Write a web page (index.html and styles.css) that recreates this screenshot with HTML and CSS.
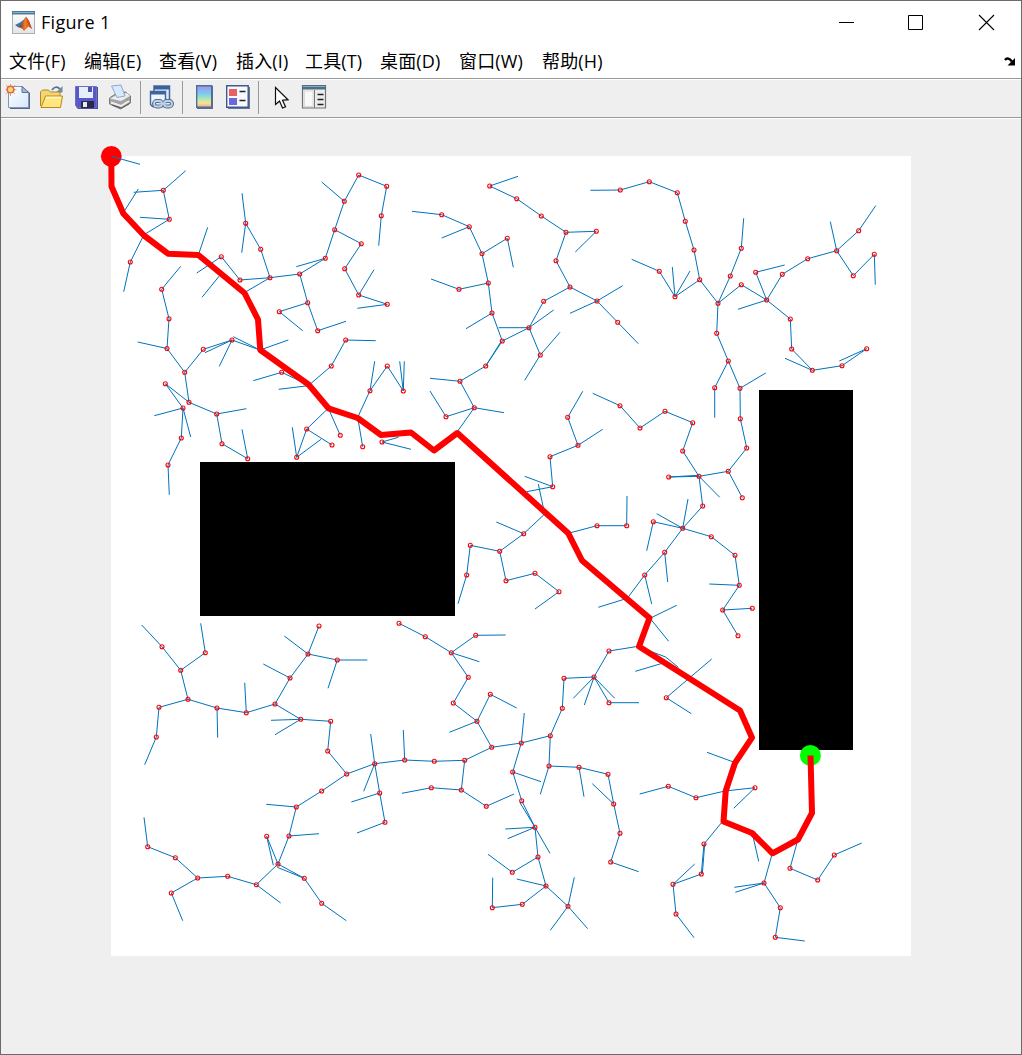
FILE: index.html
```html
<!DOCTYPE html>
<html lang="zh-CN">
<head>
<meta charset="utf-8">
<title>Figure 1</title>
<link rel="stylesheet" href="styles.css">
</head>
<body>
<div class="window">
  <header class="titlebar">
    <svg class="logo" viewBox="0 0 24 24">
      <defs>
        <linearGradient id="lg" x1="0" x2="1"><stop offset="0" stop-color="#7a1c10"/><stop offset=".5" stop-color="#f0802a"/><stop offset="1" stop-color="#b33a14"/></linearGradient>
        <linearGradient id="lb" x1="0" x2="0" y1="0" y2="1"><stop offset="0" stop-color="#fff"/><stop offset="1" stop-color="#e2e4e6"/></linearGradient>
      </defs>
      <rect x=".5" y=".5" width="22" height="22" fill="url(#lb)" stroke="#a9b0b5"/>
      <rect x="0" y="0" width="23" height="3.5" fill="#4f7c9a"/><rect x="1" y="1" width="21" height="1" fill="#84b0ca"/>
      <path d="M3 14l5-2.500 4-3 2-3-4 12.500-2-2-2 .3z" fill="#3a76b0"/>
      <path d="M6.500 16.500L10 12.500 14 5.500 17 10 20 18 16.500 15.500 12 20 9.500 16.500z" fill="url(#lg)"/>
      <path d="M14 5.500L15.500 11.500 20 18 17 10z" fill="#d4481c"/>
    </svg>
    <h1 class="title">Figure 1</h1>
    <svg class="controls" viewBox="811 1 210 45">
      <path d="M839 22.500h15M908.500 15.500h14v14h-14z" fill="none" stroke="#000"/>
      <path d="M979 15l15 15M994 15l-15 15" stroke="#000" stroke-width="1.100"/>
    </svg>
  </header>
  <nav class="menubar">
    <span>文件(F)</span><span>编辑(E)</span><span>查看(V)</span><span>插入(I)</span><span>工具(T)</span><span>桌面(D)</span><span>窗口(W)</span><span>帮助(H)</span>
    <svg class="dock" viewBox="0 0 12 10"><path d="M1 3C3 .5 5.500 1.500 8 4.500" fill="none" stroke="#000" stroke-width="2.400"/><path d="M11 1v7.500H3.500z"/></svg>
  </nav>
  <div class="toolbar">
    <svg width="34" viewBox="1 80 34 37">
      <defs><linearGradient id="pg" x1="0" y1="0" x2="1" y2="1"><stop offset="0" stop-color="#fff"/><stop offset="1" stop-color="#d5e8fb"/></linearGradient></defs>
      <path d="M9 87h14l7 6v16H10z" fill="#56688f"/>
      <path d="M8.500 86.500h14l6 6v15h-20z" fill="url(#pg)" stroke="#8294b8"/><path d="M22 86.500v6h6.500z" fill="#a7b9da" stroke="#60739f"/>
      <path d="M6 85l9 9M15 85l-9 9M10.500 84v12M5.500 89.700h11" stroke="#e7a27a"/><circle cx="10.500" cy="89.500" r="3.300" fill="#f8d377" stroke="#dc6942" stroke-width="1.500"/>
    </svg>
    <svg width="34" viewBox="35 80 34 37">
      <path d="M52 90c2-3 5-4 8-1" fill="none" stroke="#536f91" stroke-width="1.700"/><path d="M62.500 86v6.500H56z" fill="#6e8dac"/>
      <path d="M40.500 106V92l2-2h6l2 2h9.500v5" fill="#f2d575" stroke="#b8861a"/>
      <path d="M41 107.500l4.500-11.500h17l-2 11.500z" fill="#ffe780" stroke="#bd8717"/><path d="M46 97.500h15" stroke="#fff8c5" stroke-width="1.500"/>
    </svg>
    <svg width="35" viewBox="69 80 35 37">
      <path d="M76 87h22v22H78l-2-2z" fill="#4c4e9d"/><path d="M75.500 86.500h21v21h-19l-2-2z" fill="#5858c8" stroke="#6e70bd"/>
      <path d="M79 87h14v11H79z" fill="#e6edfc"/><path d="M88 87h4v5h-4z" fill="#4c54aa"/><path d="M81 101h13v7H81z" fill="#29294b"/><path d="M83 102h4v5h-4z" fill="#e8e8f4"/>
    </svg>
    <svg width="36" viewBox="104 80 36 37">
      <path d="M109.500 98l6-4 10-2 5 4v7l-10 6-11-5z" fill="#a4a4a4" stroke="#7a7a7a"/>
      <path d="M110 98.500l7-3.500 10-2 3 3-9 5z" fill="#ededed"/>
      <path d="M111.500 86l9.500-1 4 11-8 1.500z" fill="#d7e9ff" stroke="#8ca8cc"/>
      <path d="M111 102.500l10 3.500 8-5" fill="none" stroke="#eee" stroke-width="2"/><path d="M112 105l9.500 3 8-4.500" fill="none" stroke="#555"/>
      <circle cx="127.500" cy="99.500" r="1" fill="#72b450"/>
    </svg>
    <i class="sep"></i>
    <svg width="41" viewBox="141 80 41 37">
      <path d="M154 86h15.500v14H154z" fill="#dceafa" stroke="#486a9c" stroke-width="1.500"/><path d="M154 86h16v3.500h-16z" fill="#3c629b"/>
      <path d="M150.500 91.500h15v15h-13l-2-2z" fill="#eef5ff" stroke="#42659a" stroke-width="1.400"/><path d="M150 91h16v3.500h-16z" fill="#40649d"/>
      <g fill="none" stroke="#526b8e" stroke-width="4"><rect x="154" y="101" width="8" height="5.500" rx="2.700"/><rect x="164" y="101" width="8" height="5.500" rx="2.700"/></g>
      <g fill="none" stroke="#bfd3ea" stroke-width="1.800"><rect x="154" y="101" width="8" height="5.500" rx="2.700"/><rect x="164" y="101" width="8" height="5.500" rx="2.700"/><path d="M159 103.700h8"/></g>
    </svg>
    <i class="sep"></i>
    <svg width="38" viewBox="183 80 38 37">
      <defs><linearGradient id="cb" x1="0" x2="0" y1="0" y2="1"><stop offset="0" stop-color="#a293e8"/><stop offset=".35" stop-color="#7cc7f3"/><stop offset=".6" stop-color="#a7e7b4"/><stop offset=".8" stop-color="#f4e795"/><stop offset="1" stop-color="#f5a58a"/></linearGradient></defs>
      <path d="M197 86h16v23h-16z" fill="#5d6b8c"/><path d="M196.700 85.700h15v21.500h-15z" fill="url(#cb)" stroke="#526c9d" stroke-width="1.400"/>
    </svg>
    <svg width="37" viewBox="221 80 37 37">
      <path d="M228 87h22v22h-22z" fill="#69769a"/><path d="M226.700 85.700h21.500v21.500h-21.500z" fill="#f6f9ff" stroke="#405a8d" stroke-width="1.400"/>
      <path d="M229 89h8v7h-8z" fill="#e7625f"/><path d="M229 98h8v7h-8z" fill="#6b68dd"/><path d="M239.500 91.500h6M239.500 100.500h6" stroke="#222" stroke-width="1.500"/>
    </svg>
    <i class="sep"></i>
    <svg width="38" viewBox="259 80 38 37">
      <path d="M276.500 88v17l4-3.500 3 7 3-1.300-3-6.500 5.500-.5z" fill="#aaa" opacity=".7"/>
      <path d="M275.500 87.500v17l4-3.500 3 7 3-1.300-3-6.500 5.500-.5z" fill="#fff" stroke="#111" stroke-width="1.200"/>
    </svg>
    <svg width="34" viewBox="297 80 34 37">
      <path d="M302.500 85.500h23v22.500h-23z" fill="#ececec" stroke="#6f7376" stroke-width="1.200"/><path d="M302 85h24v4.500h-24z" fill="#4f6f82"/><path d="M303 86.500h22" stroke="#85adc1"/>
      <path d="M304 90.500h9.500V107H304z" fill="#dadada"/><path d="M305 91.500h7.500V106H305z" fill="#f8f8f8"/><path d="M314.500 90v18" stroke="#777"/><path d="M317.500 94.500h6M317.500 99.500h6M317.500 104.500h6" stroke="#222" stroke-width="1.600"/>
    </svg>
  </div>
  <main class="figure">
    <svg class="plot" viewBox="1 119 1020 935">
      <rect x="111" y="156" width="800" height="800" fill="#fff"/>
      <path class="obstacle" d="M200 462h255v154H200zM759 390h94v360h-94z"/>
      <circle cx="111.300" cy="156.300" r="10.400" fill="#f00"/><circle cx="810.400" cy="755.400" r="10.500" fill="#0f0"/>
      <path id="edges" class="edges"/>
      <g id="nodes" class="nodes"></g>
      <path class="route" d="M111.300 156L111.500 186.500 123.300 213.500 144 235.500 168 253.700 198.300 255 244.500 293 258 319.500 260.300 350 308.500 384.500 328.500 408.300 357.700 418 381 435 411 432.500 434 450.500 457.300 433 568.300 533.300 582 560.500 649.500 618 639 646.500 740 710.500 752 737.700 735 763 725.700 791 723.500 821.500 752 833 772.500 853.300 798 839.500 812 813 810.500 755.500"/>
      <path class="edges" d="M111.300 156.300L140 164.300"/>
    </svg>
  </main>
</div>
<script src="tree.js"></script>
</body>
</html>
```
FILE: styles.css
```css
body { margin: 0; background: #efefef; color: #000; }
.window {
  box-sizing: border-box;
  width: 1022px;
  height: 1055px;
  border: 1px solid #6b6b6b;
  background: #efefef;
  display: flex;
  flex-direction: column;
  overflow: hidden;
}
.titlebar {
  height: 45px;
  flex: none;
  background: #fff;
  display: flex;
  align-items: center;
}
.logo { width: 24px; height: 24px; margin: 0 5px 2px 11px; }
.title {
  flex: 1;
  margin: 0 0 4px;
  font: 400 18px/24px "Open Sans", "Noto Sans", sans-serif;
  letter-spacing: 0.3px;
}
.controls { width: 210px; height: 45px; }
.menubar {
  box-sizing: border-box;
  height: 32px;
  flex: none;
  padding: 0 5px 2px 8px;
  background: #fff;
  display: grid;
  grid-template-columns: 75px 75px 77px 69px 75px 79px 83px 1fr 12px;
  align-items: center;
  font: 400 18px/30px "Open Sans", "Noto Sans CJK SC", sans-serif;
  white-space: nowrap;
}
.menubar span { letter-spacing: 0.15px; }
.dock { width: 12px; height: 10px; margin-top: 2px; }
.toolbar {
  height: 37px;
  flex: none;
  display: flex;
  border-top: 1px solid #999;
  border-bottom: 1px solid #999;
  box-shadow: inset 0 1px #fff, 0 1px #fff;
  padding-top: 1px;
}
.toolbar svg { height: 37px; flex: none; }
.sep { width: 1px; height: 33px; margin-top: 1px; background: #999; flex: none; }
.figure { flex: 1; margin-top: 1px; min-height: 0; }
.plot { display: block; width: 1020px; height: 935px; }
.obstacle { fill: #000; }
.edges { fill: none; stroke: #0072bd; stroke-width: 1; }
.nodes circle { fill: none; stroke: #f00; stroke-width: 1.1; }
.route { fill: none; stroke: #f00; stroke-width: 6; stroke-linejoin: round; }
```
FILE: tree.js
```js
// One branch per line; a trailing "o" marks an expanded tree node.
const branches = `
123.3,212.7 138.3,189
133.7,192.3 163.3,190.3o 185.7,170.7
163.3,190.3 169.3,219.3o 140,217.3
169.3,219.3 144,234.7 130.3,262o 123.7,291.7
198.7,254 207.7,227.3
196.7,273 221.3,256.7o 240,280o 270,277.7o 299.7,274o 325.3,258.3o 334.7,229.7o 344.3,201.3o 358.7,175o 386.7,186.3o 381.3,215.7o 378.7,245.7
321.7,182 344.3,201.3
325.3,258.3 296.3,266.7
334.7,229.7 361.3,243.7o 344.7,268.7o 358.7,295o 387.3,304.3o 357.3,308.3
358.7,295 374,269.7
270,277.7 260.7,249.3o 245.7,223.3o 242,193.3
245.7,223.3 241.7,252.7
270,277.7 245,292.3
219.3,276 202,297.3
299.7,274 307.7,302.7o 317.7,330.7o 346,321.3
307.7,302.7 279.3,311.7o 302.7,330.7
180.7,266.3 161.7,289.3o 169,318.7o 167,348.5o 137.7,342
167,348.5 184.7,372.3o 203.3,349.3o 232,340o 260,350 288.3,340
232,340 205,352.7
232,340 219.3,366.3
233.3,336.7 260,350
184.7,372.3 189,402.3o 216.7,414o 246.3,408.7
216.7,414 222,443.7o 247.7,458.7o 242,429.3
189,402.3 165.3,383.7o 183,408o 154.3,415.7
183,408 190.7,437
183,408 181.3,438o 168,465o 169.3,494.7
253.3,380.7 281.7,372.3o 308.3,385
278.7,389.3 308.3,385.7 331.3,366o 345.7,340o 375.7,340.7
328.3,408.3 306.7,429o 332,445o
306.7,429 296.7,457.3o 292.3,427.3
296.7,457.3 321,439.3
328.3,408.3 340.3,435.3o
362.7,446.7o 357.7,417.3 370,390.7o 374.7,361.3
370,390.7 387.3,366o 403.3,391o 399.7,361.3
403.3,391 404.3,361.3
398.3,437.3 382,442o 411,449.3
412,211.3 441.7,214.7o 469.3,226.7o 441.7,238
469.3,226.7 482,253.7o 507.3,238.3o 513.3,267.3
482,253.7 488.3,283o 459,289.3o 431,279
488.3,283 492,313o 466,328.7
492,313 502.3,341o 485.7,366o 460,381.3o 430,378.3
485.7,366 501,341.7
460,381.3 474.3,407.7o 446,416.7o 430,391
504,412.7 474.3,407.7 457.3,431.7
502.3,341 529,327.7o 498.7,327.7
553.7,310 529,327.7 540.3,355o 560,332.3
540.3,355 524.7,380.3
529,327.7 543.7,301.3o 570,287o 556,260.7o 566,232.3o 596.3,231.3o 575.3,252
566,232.3 541.3,216o 516.7,198.7o 489.7,186o 518,176.3
570,287 597,301o 622.7,285.7
570,313.3 597,301 617.7,322.3o 638.3,343.7
582.7,391.3 567.7,417.3o 578,445.3o 602.7,429.3
578,445.3 550,456.7o 552.7,486.7o 524.7,476.3
552.7,486.7 526.7,491.7
590.3,190.3 620.3,190o 649.3,181.7o 677.3,192.7o 685.3,221.3o 694,250o 699.7,279.7o 675,296.7o 659.3,271.3o 631.7,259.3
672.3,267 675,296.7 690,271
699.7,279.7 718,303.3o 730.3,276o 741.3,248.3o 743.7,218.3
718,303.3 741.3,284.7o 766.7,300o 755.7,272.3o 784.7,265
738,309.3 766.7,300 782.3,274.3o 807.7,258.7o 836.7,250.7o 830.3,221.7
836.7,250.7 858.7,230.7o 875.7,205.7
836.7,250.7 853.3,275.7o 874.3,254.3o 875.3,284.7
766.7,300 790.3,319o 791.7,349o 812.3,370.3o 785,358.3
812.3,370.3 842,365.7o 866.7,348.7o 839.3,361
718,303.3 716.7,333.3o 728.3,361o 714.7,387.7o 714.7,417.7
728.3,361 740,388.3o 765.7,373
740,388.3 740.3,418.7o 746.7,448o 728.3,471.3o 742.3,497.7o
728.3,471.3 699,476.3o 668.7,477o 699,475.3
719.7,497.3 699,476.3 682.7,451o 692.7,422.7o 665,411.3o 640,428o 620,405.7o 592.7,393.3
699,476.3 702.7,506o 682.7,528.3o 688,499
656.7,513.7 682.7,528.3 653.3,521.7o 646.7,550.7
682.7,528.3 711.3,536.7o 735,555.3o 739.3,585.3o 709.3,584
739.3,585.3 722.7,610o 752.3,608.3o
722.7,610 738,635.7o
682.7,528.3 664.7,552.3o 667.7,582
664.7,552.3 644.7,575o 651.7,604
644.7,575 627.3,598.3 598.3,607.3
676.7,605.3 650,618.3 668.7,641.3
568.3,533.3 597,525.7o 626.7,525.7o 627,496
538.3,484 544.7,514 523.7,533.7o 496.3,522
523.7,533.7 499.7,551.3o 470.3,545.3o 466.7,575o 458,603.7
499.7,551.3 506,580.7o 535,573.3o 559,591.7o 535,609
141.7,625 162,646.7o 180.7,670.3o 205.3,652.7o 200.7,623.3
180.7,670.3 188,699.3o 159,707.3o 156.3,737o 144.7,764.7
188,699.3 217,708o 217.7,737.7
217,708 246.3,712.7o 244.7,682.7
246.3,712.7 275,704o 290,678o 263.3,664
290,678 308,654o 284.3,636
319,626o 308,654 337.3,660o 367.3,660
337.3,660 328,688.3
275,704 300.7,719.3o 271,720.3
275,734.7 300.7,719.3 330.7,721.3o 327.7,751o 346.7,774o 374.7,763.7o 370.7,734
363.7,791.3 374.7,763.7 379.7,793o 351.3,802
379.7,793 385,822.3o 357,833
346.7,774 321.7,791o 296.3,807o 266.3,804.3
296.3,807 289,836o 319,833.7
289,836 278,864o 266.7,836.3o 273.3,865.3
278,864 304.3,878.3o 277.3,867.3
304.3,878.3 321.7,903.3o 346.3,920.7
278,864 256.3,884.7o 280.7,903
256.3,884.7 227.7,876.3o 197.7,878o 175.3,857.7o 147.7,846.7o 144,817.3
197.7,878 171.3,893o 182.7,920.7
374.7,763.7 404.7,760o 403.3,730
404.7,760 434.3,761.3o 464.7,760.3o 461.3,790o 431.3,787.7o 402,793.3
461.3,790 486.3,806.3o 514,794
464.7,760.3 491.7,747.3o 477,721.3o 449.3,732.3
477,721.3 490.3,694.3o 516.7,708
477,721.3 453.3,703o 468.3,677.3o 451.3,652.7o 479.3,661.7
451.3,652.7 475.7,635.3o 505.7,635
451.3,652.7 425.3,636.7o 399,623.3o
491.7,747.3 521.3,743o 524.3,713
521.3,743 550.3,735.7o 562.3,708.3o 564,678.3o 594,677o 573.3,698.3
584.3,705 594,677 614.7,698.3
594,677 609,702.7o 639,702.7
594,677 609,651o 638.3,646.3
550.3,735.7 549,766o 540.3,794.3
549,766 579,767.3o 584,796.7
579,767.3 608,774.3o 613.7,804o 592.3,783.7
613.7,804 620,833.3o 610.7,862o 638.7,871.7
521.3,743 512.7,772o 541,781.7
512.7,772 521.7,800.7o 535,827.3o 520,802.7
505.3,829 535,827.3 507.7,838.7
550,853.3 535,827.3 538,857o 512.3,872.3o 488,854.3
538,857 546,886o 516.7,879
546,886 522.3,904.3o 492.3,907.7o 492.7,877.7
546,886 568,906.3o 574.3,877.3
550.3,930.3 568,906.3 587.7,928.7
639,646.3 653.3,652.3 665.7,657 678.3,667.3
635.3,671.3 663.3,663
711.7,659 666.3,697.7o 691.3,713.7
707,752.3 734.3,762.3
639.7,794 668.3,786.3o 696,797.7o 725,791 755,787.7o 733.7,808.3
722.3,821.7 704,844o 701.3,874o 673,884.3o 694.7,864
704.7,844 702.3,874
673,884.3 676,914o 694,937.7
752.7,835 758.7,861.3
772.3,853.3 764,883o 734.3,887.3
735.3,892.3 764,883 780.3,907.7o 775.3,937.3o 804.7,941
797.3,841.7 790,868.3o 817.7,880o 834.3,855o 861.7,843
`.trim().split("\n").map(line => line.split(" "));

let d = "";
const nodes = document.getElementById("nodes");
for (const branch of branches) {
  branch.forEach((point, i) => {
    const [x, y] = point.replace("o", "").split(",").map(Number);
    d += (i ? "L" : "M") + x + " " + y;
    if (point.endsWith("o")) {
      const c = document.createElementNS("http://www.w3.org/2000/svg", "circle");
      c.setAttribute("cx", x);
      c.setAttribute("cy", y);
      c.setAttribute("r", 2);
      nodes.appendChild(c);
    }
  });
}
document.getElementById("edges").setAttribute("d", d);
```
